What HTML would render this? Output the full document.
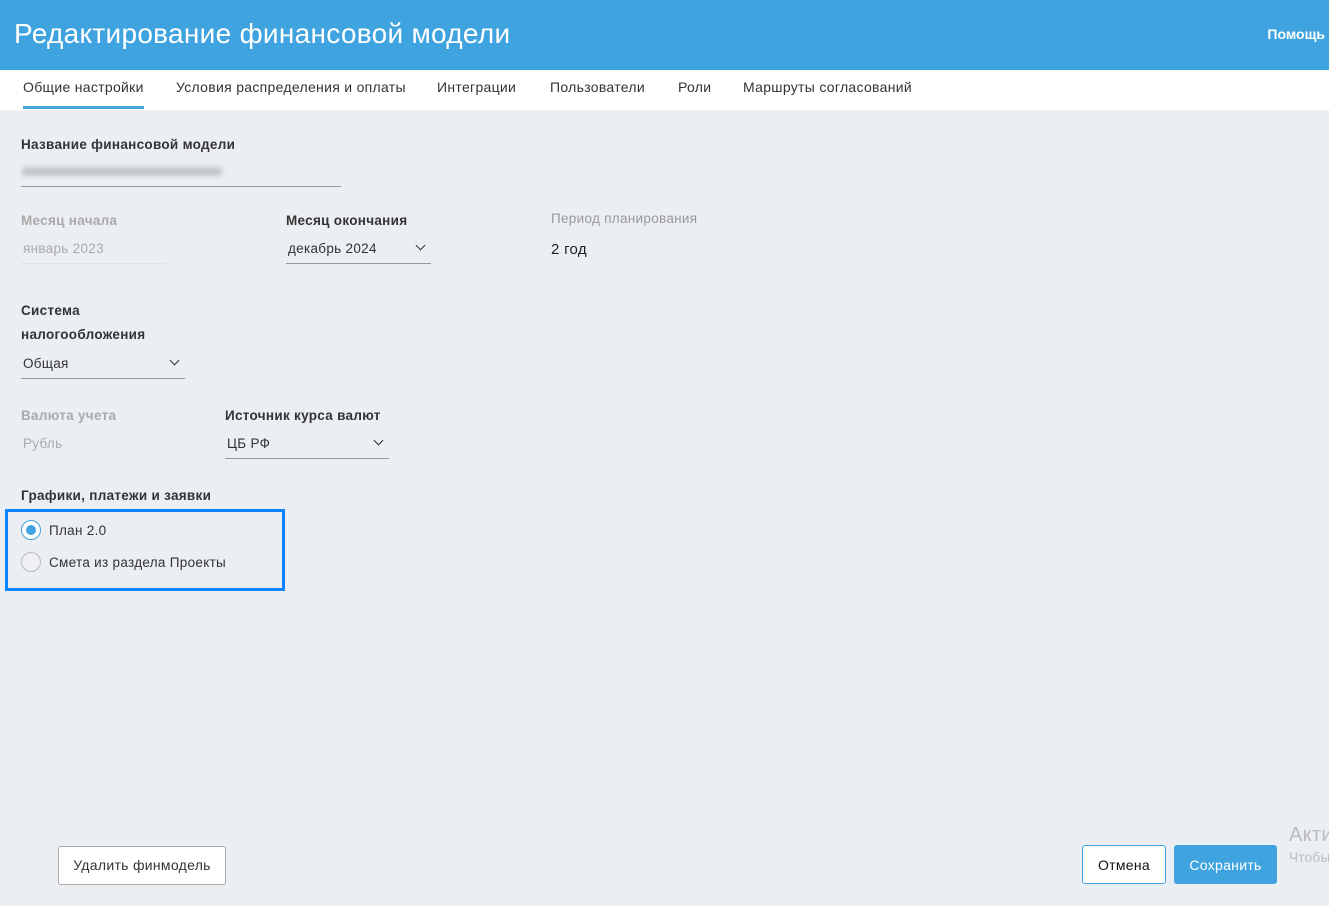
<!DOCTYPE html>
<html><head><meta charset="utf-8"><style>
*{box-sizing:border-box;margin:0;padding:0}
body{width:1329px;height:906px;overflow:hidden;background:#ebeef2;font-family:"Liberation Sans","Noto Sans CJK SC",sans-serif;color:#333;position:relative}
.hdr{position:absolute;left:0;top:0;width:1329px;height:70px;background:#3ea3df;color:#fff}
.hdr h1{position:absolute;left:14px;top:18px;font-size:28px;font-weight:normal;letter-spacing:0.3px}
.hdr .help{position:absolute;right:4px;top:26px;font-size:14px;font-weight:bold}
.tabs{position:absolute;top:70px;left:0;width:1329px;height:40px;background:#fff}
.tab{position:absolute;top:9px;font-size:14px;color:#333;letter-spacing:0.3px}
.ul{position:absolute;left:23px;top:106px;width:121px;height:3px;background:#3ea3df}
.a{position:absolute;font-size:13.5px;letter-spacing:0.3px}
.lbl{font-weight:bold;color:#333}
.dis{color:#aaa}
.line{position:absolute;height:1px;background:#999}
.chev{position:absolute;width:7px;height:7px;border-right:1.5px solid #333;border-bottom:1.5px solid #333;transform:rotate(45deg)}
.btn{position:absolute;height:39px;border-radius:3px;font-size:14px;text-align:center;line-height:39px;letter-spacing:0.3px}
</style></head><body>
<div class="hdr"><h1>Редактирование финансовой модели</h1><div class="help">Помощь</div></div>
<div class="tabs">
<div class="tab" style="left:23px">Общие настройки</div>
<div class="tab" style="left:176px">Условия распределения и оплаты</div>
<div class="tab" style="left:437px">Интеграции</div>
<div class="tab" style="left:550px">Пользователи</div>
<div class="tab" style="left:678px">Роли</div>
<div class="tab" style="left:743px">Маршруты согласований</div>
</div>
<div class="ul"></div>
<div class="a lbl" style="left:21px;top:137px">Название финансовой модели</div>
<div style="position:absolute;left:22px;top:167px;width:200px;height:9px;background:#c4c6cb;filter:blur(2px);border-radius:3px"></div>
<div class="line" style="left:21px;top:186px;width:320px"></div>
<div class="a lbl dis" style="left:21px;top:213px;color:#aaa">Месяц начала</div>
<div class="a dis" style="left:23px;top:241px">январь 2023</div>
<div class="line" style="left:21px;top:263px;width:145px;background:#e0e2e5"></div>
<div class="a lbl" style="left:286px;top:213px">Месяц окончания</div>
<div class="a" style="left:288px;top:241px">декабрь 2024</div>
<div class="chev" style="left:417px;top:242px"></div>
<div class="line" style="left:286px;top:263px;width:145px"></div>
<div class="a" style="left:551px;top:211px;color:#999">Период планирования</div>
<div class="a" style="left:551px;top:241px;font-size:15px;color:#222">2 год</div>
<div class="a lbl" style="left:21px;top:299px;line-height:24px">Система<br>налогообложения</div>
<div class="a" style="left:23px;top:356px">Общая</div>
<div class="chev" style="left:171px;top:357px"></div>
<div class="line" style="left:21px;top:378px;width:164px"></div>
<div class="a lbl" style="left:21px;top:408px;color:#aaa">Валюта учета</div>
<div class="a dis" style="left:23px;top:436px">Рубль</div>
<div class="a lbl" style="left:225px;top:408px">Источник курса валют</div>
<div class="a" style="left:227px;top:436px">ЦБ РФ</div>
<div class="chev" style="left:375px;top:437px"></div>
<div class="line" style="left:225px;top:458px;width:164px"></div>
<div class="a lbl" style="left:21px;top:488px">Графики, платежи и заявки</div>
<div style="position:absolute;left:5px;top:509px;width:280px;height:82px;border:3px solid #0a84ff"></div>
<div style="position:absolute;left:21px;top:520px;width:20px;height:20px;border-radius:50%;border:1.5px solid #3ea3df;background:#fff"></div>
<div style="position:absolute;left:26px;top:525px;width:10px;height:10px;border-radius:50%;background:#3ea3df"></div>
<div class="a" style="left:49px;top:523px">План 2.0</div>
<div style="position:absolute;left:21px;top:552px;width:20px;height:20px;border-radius:50%;border:1.5px solid #bbb;background:#eef0f3"></div>
<div class="a" style="left:49px;top:555px">Смета из раздела Проекты</div>
<div class="btn" style="left:58px;top:846px;width:168px;background:#fff;border:1px solid #aaa;line-height:37px">Удалить финмодель</div>
<div class="btn" style="left:1082px;top:845px;width:84px;background:#fff;border:1px solid #3ea3df;color:#111;line-height:38px">Отмена</div>
<div class="btn" style="left:1174px;top:845px;width:103px;background:#3ea3df;color:#fff;line-height:40px">Сохранить</div>
<div class="a" style="left:1289px;top:824px;font-size:20px;color:#bbb">Акти</div>
<div class="a" style="left:1289px;top:850px;color:#bbb">Чтобы</div>
</body></html>
